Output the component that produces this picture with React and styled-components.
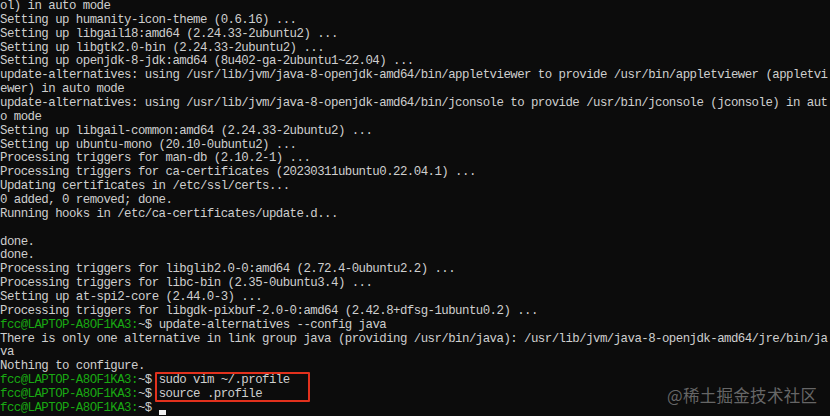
import React from "react";
import styled, { createGlobalStyle } from "styled-components";

const Global = createGlobalStyle`
  html, body { margin: 0; padding: 0; background: #0c0c0c; }
  #root { width: 830px; height: 416px; overflow: hidden; }
`;

const Terminal = styled.div`
  position: relative;
  width: 830px;
  height: 416px;
  background: #0c0c0c;
  color: #cfcfcf;
  font-family: "Liberation Mono", "DejaVu Sans Mono", monospace;
  font-size: 12.4px;
  letter-spacing: -0.54px;
  overflow: hidden;
`;

const Line = styled.div`
  height: 13.86px;
  line-height: 13.86px;
  white-space: pre;
`;

const User = styled.span`
  color: #19a812;
`;

const Cursor = styled.span`
  display: inline-block;
  width: 7px;
  height: 5px;
  background: #f2f2f2;
  vertical-align: -4px;
`;

const Highlight = styled.div`
  position: absolute;
  left: 155px;
  top: 372px;
  width: 155px;
  height: 30px;
  border: 2px solid #e2311d;
  box-sizing: border-box;
  border-radius: 1px;
`;

const Watermark = styled.div`
  position: absolute;
  left: 667px;
  top: 383px;
  font-family: "Noto Sans CJK SC", "Noto Sans", sans-serif;
  font-size: 16.5px;
  letter-spacing: 0.3px;
  color: rgba(165, 165, 165, 0.6);
  white-space: nowrap;
`;

const lines = [
  "ol) in auto mode",
  "Setting up humanity-icon-theme (0.6.16) ...",
  "Setting up libgail18:amd64 (2.24.33-2ubuntu2) ...",
  "Setting up libgtk2.0-bin (2.24.33-2ubuntu2) ...",
  "Setting up openjdk-8-jdk:amd64 (8u402-ga-2ubuntu1~22.04) ...",
  "update-alternatives: using /usr/lib/jvm/java-8-openjdk-amd64/bin/appletviewer to provide /usr/bin/appletviewer (appletvi",
  "ewer) in auto mode",
  "update-alternatives: using /usr/lib/jvm/java-8-openjdk-amd64/bin/jconsole to provide /usr/bin/jconsole (jconsole) in aut",
  "o mode",
  "Setting up libgail-common:amd64 (2.24.33-2ubuntu2) ...",
  "Setting up ubuntu-mono (20.10-0ubuntu2) ...",
  "Processing triggers for man-db (2.10.2-1) ...",
  "Processing triggers for ca-certificates (20230311ubuntu0.22.04.1) ...",
  "Updating certificates in /etc/ssl/certs...",
  "0 added, 0 removed; done.",
  "Running hooks in /etc/ca-certificates/update.d...",
  "",
  "done.",
  "done.",
  "Processing triggers for libglib2.0-0:amd64 (2.72.4-0ubuntu2.2) ...",
  "Processing triggers for libc-bin (2.35-0ubuntu3.4) ...",
  "Setting up at-spi2-core (2.44.0-3) ...",
  "Processing triggers for libgdk-pixbuf-2.0-0:amd64 (2.42.8+dfsg-1ubuntu0.2) ...",
  { cmd: "update-alternatives --config java" },
  "There is only one alternative in link group java (providing /usr/bin/java): /usr/lib/jvm/java-8-openjdk-amd64/jre/bin/ja",
  "va",
  "Nothing to configure.",
  { cmd: "sudo vim ~/.profile" },
  { cmd: "source .profile" },
  { cmd: "", cursor: true },
];

function Prompt() {
  return (
    <>
      <User>fcc@LAPTOP-A8OF1KA3:</User>~$
    </>
  );
}

export default function App() {
  return (
    <>
      <Global />
      <Terminal>
        {lines.map((l, i) =>
          typeof l === "string" ? (
            <Line key={i}>{l}</Line>
          ) : (
            <Line key={i}>
              <Prompt /> {l.cmd}
              {l.cursor && <Cursor />}
            </Line>
          )
        )}
        <Highlight />
        <Watermark>@稀土掘金技术社区</Watermark>
      </Terminal>
    </>
  );
}
